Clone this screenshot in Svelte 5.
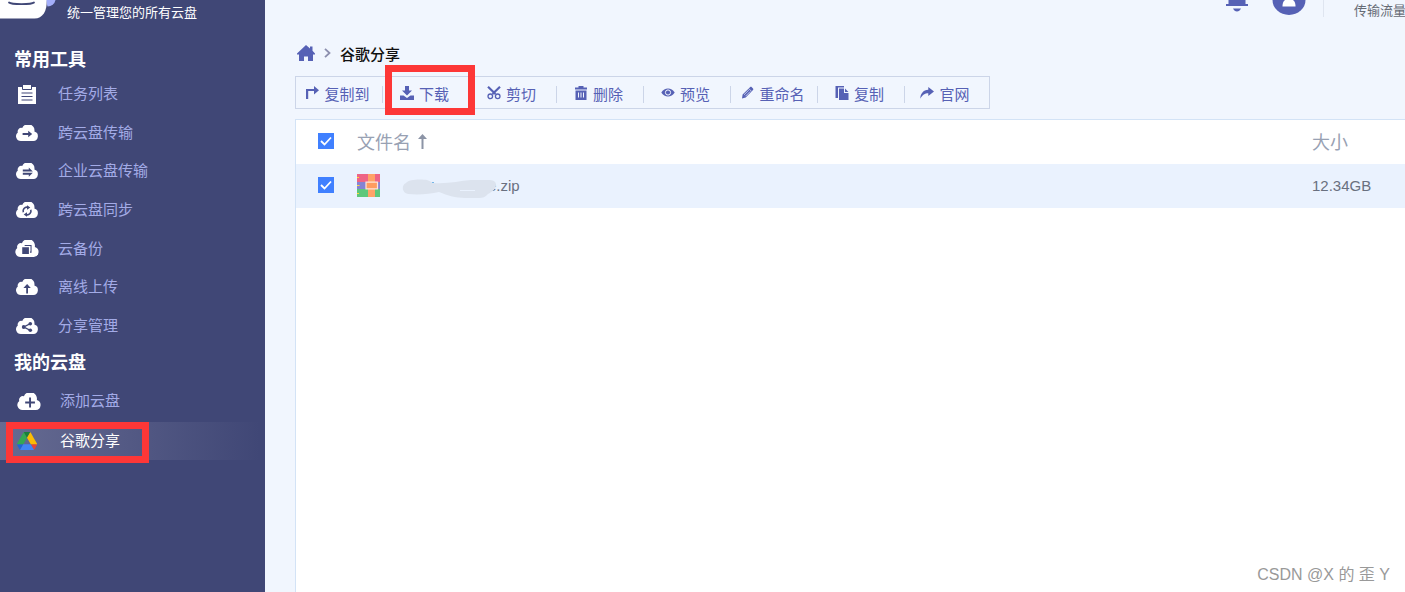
<script>
  const tools = [
    { icon: 'list', label: '任务列表' },
    { icon: 'transfer', label: '跨云盘传输' },
    { icon: 'business', label: '企业云盘传输' },
    { icon: 'sync', label: '跨云盘同步' },
    { icon: 'backup', label: '云备份' },
    { icon: 'upload', label: '离线上传' },
    { icon: 'share', label: '分享管理' }
  ];

  const actions = [
    { icon: 'copyto', label: '复制到' },
    { icon: 'download', label: '下载', marked: true },
    { icon: 'cut', label: '剪切' },
    { icon: 'delete', label: '删除' },
    { icon: 'preview', label: '预览' },
    { icon: 'rename', label: '重命名' },
    { icon: 'copy', label: '复制' },
    { icon: 'site', label: '官网' }
  ];

  let allChecked = $state(true);
  let fileChecked = $state(true);
</script>

{#snippet cloud(kind)}
  <svg class="cloud" class:large={kind === 'backup' || kind === 'add'} viewBox="0 0 22 16" aria-hidden="true">
    <path fill="#fff" d="M4.800 16A4.800 4.800 0 0 1 1.800 7.500 3.600 3.600 0 0 1 6.200 3 6.400 6.400 0 0 1 18.400 6.600 4.800 4.800 0 0 1 17.400 16z" />
    {#if kind === 'transfer'}
      <path fill="#404776" d="M6.600 8h5.600V5.800L16.200 9l-4 3.200V10H6.600z" />
    {:else if kind === 'business'}
      <path fill="#404776" d="M6.800 6.400h6V4.400L16.800 8.400h-10zM6.800 9.800h10L12.800 13.800v-2h-6z" />
    {:else if kind === 'sync'}
      <g fill="none" stroke="#404776" stroke-width="1.600">
        <path d="M7.300 10.300A3.900 3.900 0 0 1 11.600 5.200M14.800 7.800A3.900 3.900 0 0 1 10.400 12.800" />
      </g>
      <path fill="#404776" d="M11 3.200l3.300 2.300-3.300 2.200zM11 14.800l-3.300-2.300 3.300-2.200z" />
    {:else if kind === 'backup'}
      <path fill="#404776" d="M6.500 6.800h6.300v6.400H6.500z" />
      <path fill="none" stroke="#404776" stroke-width="1" d="M8.800 5.200h6v6.200h-1" />
    {:else if kind === 'upload'}
      <path fill="#404776" d="M10.200 14.500V9H7.400l3.700-4 3.700 4H12v5.500z" />
    {:else if kind === 'share'}
      <path fill="none" stroke="#404776" stroke-width="1.200" d="M14.300 5.600 7.700 9l6.600 3.400" />
      <g fill="#404776"><circle cx="14.300" cy="5.700" r="1.800" /><circle cx="7.700" cy="9" r="1.900" /><circle cx="14.300" cy="12.300" r="1.800" /></g>
    {:else if kind === 'add'}
      <path fill="#404776" d="M11.100 4.300h1.800v3.800h3.700v1.800h-3.700v3.800h-1.800V9.900H7.400V8.100h3.700z" />
    {/if}
  </svg>
{/snippet}

<div class="page">
  <aside>
    <div class="brand">
      <svg width="56" height="19" viewBox="0 0 56 19" aria-hidden="true">
        <path fill="#a3aefa" d="M46 0h9.500a8 8 0 0 1-8 6.500z" />
        <path fill="#fff" d="M0 0h46.500c1 11-4 18.500-12 18.500H0z" />
        <path fill="none" stroke="#404776" stroke-width="1.800" stroke-linecap="round" d="M9 2.500c2.500 2.200 22.500 2.200 25 0" />
      </svg>
      <span>统一管理您的所有云盘</span>
    </div>
    <nav>
      <h2>常用工具</h2>
      <ul class="tools">
        {#each tools as tool}
          <li>
            <a href="#{tool.icon}">
              <span class="slot">
                {#if tool.icon === 'list'}
                  <svg width="18" height="19" viewBox="0 0 18 19" aria-hidden="true">
                    <path fill="#fff" d="M0 2h5V0h8v2h5v17H0z" />
                    <path fill="none" stroke="#404776" d="M4.500 2v2.500h9V2" />
                    <path fill="none" stroke="#404776" stroke-width="1.200" d="M3.500 8h11M3.500 11.500h11M3.500 15h11" />
                  </svg>
                {:else}
                  {@render cloud(tool.icon)}
                {/if}
              </span>
              {tool.label}
            </a>
          </li>
        {/each}
      </ul>
      <h2 class="mine">我的云盘</h2>
      <ul class="drives">
        <li><a href="#add"><span class="slot">{@render cloud('add')}</span>添加云盘</a></li>
        <li class="active">
          <a href="#google">
            <span class="slot drive">
              <svg width="20" height="18" viewBox="0 0 87 78" aria-hidden="true">
                <path fill="#1e66d8" d="M6.600 66.900l3.800 6.600c.8 1.400 2 2.500 3.300 3.300L27.500 53H0c0 1.600.4 3.100 1.200 4.500z" />
                <path fill="#34a853" d="M43.600 25 29.900 1.200c-1.300.8-2.500 1.900-3.300 3.300L1.200 48.500A9 9 0 0 0 0 53h27.500z" />
                <path fill="#ea4335" d="M73.600 76.800c1.300-.8 2.500-1.900 3.300-3.300l9.200-16c.8-1.400 1.200-2.900 1.200-4.500H59.800l5.900 11.500z" />
                <path fill="#188038" d="M43.600 25 57.400 1.200C56 .4 54.500 0 52.900 0H34.400c-1.600 0-3.200.4-4.500 1.200z" />
                <path fill="#4285f4" d="M59.800 53H27.500L13.700 76.800c1.400.8 2.900 1.200 4.500 1.200h50.900c1.600 0 3.200-.4 4.500-1.200z" />
                <path fill="#fbbc04" d="M73.400 26.500 60.700 4.500c-.8-1.400-2-2.500-3.300-3.300L43.600 25l16.200 28h27.400c0-1.600-.4-3.100-1.200-4.500z" />
              </svg>
            </span>
            谷歌分享
          </a>
          <i class="mark"></i>
        </li>
      </ul>
    </nav>
  </aside>

  <main>
    <header>
      <button class="plain" aria-label="通知">
        <svg width="22" height="12" viewBox="0 0 22 12" aria-hidden="true">
          <path fill="#5661b5" d="M2.500 0h17v4H22v2H0V4h2.500zM7 8.500h8c-1 2-2.200 3-4 3s-3-1-4-3z" />
        </svg>
      </button>
      <button class="plain" aria-label="账户">
        <svg width="34" height="15" viewBox="0 0 34 15" aria-hidden="true">
          <path fill="#5661b5" d="M.5 0h33A16.500 15 0 0 1 .5 0z" />
          <path fill="#fff" d="M13 0h8c2 1.500 2.500 3.500 2.500 6.500h-13C10.500 3.500 11 1.500 13 0z" />
        </svg>
      </button>
      <span class="traffic">传输流量</span>
    </header>

    <nav class="crumbs">
      <a href="#home" aria-label="主页">
        <svg width="18" height="16" viewBox="0 0 18 16" aria-hidden="true">
          <path fill="#5661b5" d="M9 0 13 3.500V1.500h2.500v4.300L18 8.500v1h-2V16h-5v-4.500H7V16H2V9.500H0v-1z" />
        </svg>
      </a>
      <svg width="7" height="10" viewBox="0 0 7 10" aria-hidden="true"><path fill="none" stroke="#8c8fae" stroke-width="1.800" d="m1 .8 4.500 4.200L1 9.200" /></svg>
      <strong>谷歌分享</strong>
    </nav>

    <div class="toolbar">
      {#each actions as action}
        <button>
          <svg width="14" height="14" viewBox="0 0 14 14" fill="#5661b5" aria-hidden="true">
            {#if action.icon === 'copyto'}
              <path d="M1 13V3h8V0l5 4.200L9 8.400V5H3.200v8z" />
            {:else if action.icon === 'download'}
              <path d="M5 0h4v4.500h3L7 9.500 2 4.500h3zM0 9.500h3.500L7 12l3.500-2.500H14V14H0z" />
            {:else if action.icon === 'cut'}
              <path fill="none" stroke="#5661b5" stroke-width="2.200" d="M1 .8 8.500 8M13 .8 5.500 8" />
              <g fill="none" stroke="#5661b5" stroke-width="1.300"><circle cx="3.300" cy="10.300" r="2.300" /><circle cx="10.700" cy="10.300" r="2.300" /></g>
            {:else if action.icon === 'delete'}
              <path fill-rule="evenodd" d="M4.500 0h5v1.500H13v2H1v-2h3.500zM1.500 4.500h11V14h-11zM4 6.500v5h1v-5zm2.500 0v5h1v-5zm2.500 0v5h1v-5z" />
            {:else if action.icon === 'preview'}
              <path d="M.3 6.500C3.500 1.200 10.500 1.200 13.700 6.500 10.500 11.800 3.500 11.800.3 6.500z" />
              <circle cx="7" cy="6.500" r="2.600" fill="none" stroke="#f1f6fe" />
            {:else if action.icon === 'rename'}
              <path d="M2 12.500 2.600 8.600 10 1.200c.6-.6 1.200-.6 1.800 0l1.200 1.200c.5.5.5 1.100 0 1.700L5.700 11.500z" />
              <path fill="none" stroke="#f1f6fe" stroke-width=".7" d="M8.800 2.600 11.500 5.300M4 8.800l4.800-4.700M5.500 10.200l4.700-4.700" />
            {:else if action.icon === 'copy'}
              <path d="M.5 0H9v1.500H3V12H.5zM4 2.500h5V7h4.500v7H4zM10 2.500 13.500 6H10z" />
            {:else}
              <path d="M8.300 1 14 5.400 8.300 10V7.300C4.800 7.300 2.500 8.800.3 12.700.5 7.500 3.200 4.200 8.300 3.800z" />
            {/if}
          </svg>
          {action.label}
          {#if action.marked}<i class="mark"></i>{/if}
        </button>
      {/each}
    </div>

    <section class="panel">
      <table>
        <thead>
          <tr>
            <th class="pick"><input type="checkbox" aria-label="全选" bind:checked={allChecked} /></th>
            <th>
              <span class="name">文件名
                <svg class="sort" width="9" height="15" viewBox="0 0 9 15" aria-hidden="true"><path fill="#8c94a6" d="M4.500 0 9 5H5.500v10h-2V5H0z" /></svg>
              </span>
            </th>
            <th class="size">大小</th>
          </tr>
        </thead>
        <tbody>
          <tr>
            <td class="pick"><input type="checkbox" aria-label="选择文件" bind:checked={fileChecked} /></td>
            <td>
              <span class="file">
                <svg width="23" height="23" viewBox="0 0 23 23" aria-hidden="true">
                  <path fill="#ee6586" d="M0 0h23v8H0z" />
                  <path fill="#8583d3" d="M0 8h23v7H0z" />
                  <path fill="#5ec77b" d="M0 15h23v8H0z" />
                  <path fill="#ffa368" d="M11 0h7v23h-7z" />
                  <path fill="#ff9c60" stroke="#ffe5d8" stroke-width="1.200" d="M9 8.200h11.500v6.600H9z" />
                  <path stroke="#ffd83b" d="M0 3.500h2M0 11.500h2.500M0 19.500h2" />
                </svg>
                <svg class="smudge" width="96" height="24" viewBox="0 0 96 24" aria-hidden="true">
                  <path fill="#dce3ee" d="M5 8c2-4 16-4 21-3l7 3c14 1 25-2 37-3h17c5 0 8 1 8 5 0 4-4 7-8 9-3 3-5 4-9 4H64c-9 0-19-3-26-6-9 2-20 3-31 2C1 18 0 10 5 8z" />
                  <path stroke="#eaf2fe" d="M59 15.500h15" />
                  <path stroke="#77b7e8" d="M31 7.500h2" />
                </svg>
                <span>e.zip</span>
              </span>
            </td>
            <td class="size">12.34GB</td>
          </tr>
        </tbody>
      </table>
    </section>
  </main>
  <span class="credit">CSDN @X 的 歪 Y</span>
</div>

<style>
  :global(body) {
    margin: 0;
  }
  .page {
    position: relative;
    display: grid;
    grid-template-columns: 265px minmax(0, 1fr);
    min-height: 100vh;
    background: #f1f6fe;
    font-family: "Liberation Sans", "Noto Sans CJK SC", sans-serif;
  }
  svg {
    display: block;
    flex: none;
  }
  a {
    color: inherit;
    text-decoration: none;
  }
  ul {
    list-style: none;
    margin: 0;
    padding: 0;
  }
  button {
    font: inherit;
    border: 0;
    background: none;
    cursor: pointer;
  }
  aside {
    background: #404776;
    color: #a3abe6;
  }
  .brand {
    display: flex;
    gap: 11px;
    height: 46px;
    color: #fff;
    font-size: 13px;
    line-height: 26px;
  }
  h2 {
    margin: 0;
    padding-left: 14px;
    color: #fff;
    font-size: 18px;
    line-height: 29px;
  }
  h2.mine {
    line-height: 37px;
  }
  .tools {
    display: grid;
    grid-auto-rows: 1fr;
    min-height: 270px;
  }
  li {
    position: relative;
    display: grid;
  }
  li a {
    display: flex;
    align-items: center;
    gap: 19px;
    padding-left: 15px;
    font-size: 15px;
    line-height: 24px;
  }
  .drives {
    display: grid;
    grid-auto-rows: 38px;
    gap: 2px;
  }
  .drives a {
    padding-left: 17px;
  }
  .slot {
    display: flex;
    justify-content: center;
    width: 24px;
  }
  .slot.drive {
    justify-content: flex-start;
  }
  .cloud {
    width: 22px;
    height: 16px;
  }
  .cloud.large {
    width: 24px;
    height: 17px;
  }
  .active {
    color: #fff;
    background: linear-gradient(90deg, #666b92, #404776 98%);
  }
  .mark {
    position: absolute;
    border: 7px solid #fd3737;
    pointer-events: none;
  }
  .active .mark {
    inset: 0 116px -3px 6px;
  }
  main {
    display: flex;
    flex-direction: column;
    padding-left: 30px;
  }
  header {
    display: flex;
    justify-content: flex-end;
    align-items: flex-start;
    height: 40px;
    overflow: hidden;
  }
  .plain {
    padding: 0;
    margin-right: 24px;
  }
  .plain + .plain {
    margin-right: 17px;
  }
  .traffic {
    box-sizing: border-box;
    width: 82px;
    height: 17px;
    padding-left: 30px;
    border-left: 1px solid #dfe5f0;
    color: #666b75;
    font-size: 13px;
    line-height: 22px;
    white-space: nowrap;
    overflow: hidden;
  }
  .crumbs {
    display: flex;
    align-items: center;
    gap: 9px;
    height: 26px;
    padding: 0 0 10px 2px;
    font-size: 15px;
    color: #111;
  }
  .crumbs strong {
    font-weight: 500;
  }
  .toolbar {
    display: flex;
    align-self: flex-start;
    height: 31px;
    border: 1px solid #ccd5e8;
  }
  .toolbar button {
    position: relative;
    display: flex;
    align-items: center;
    justify-content: center;
    gap: 5px;
    width: 87px;
    padding: 1px 4px 0 0;
    color: #5661b5;
    font-size: 15px;
    white-space: nowrap;
  }
  .toolbar button:not(:last-child)::after {
    content: "";
    position: absolute;
    right: 0;
    top: 9px;
    height: 17px;
    border-right: 1px solid #ccd5e8;
  }
  .toolbar button:last-child {
    width: 84px;
  }
  .toolbar .mark {
    inset: -12px -5px -7px 2px;
    z-index: 1;
  }
  .panel {
    flex: 1;
    margin-top: 10px;
    border: solid #d3e3f6;
    border-width: 1px 0 0 1px;
    background: #fff;
  }
  table {
    width: 100%;
    table-layout: fixed;
    border-collapse: collapse;
  }
  th,
  td {
    box-sizing: border-box;
    height: 44px;
    padding: 0 0 2px;
    text-align: left;
  }
  th {
    color: #98a1b3;
    font-size: 18px;
    font-weight: 400;
  }
  td {
    color: #697080;
    font-size: 15px;
  }
  tbody tr {
    background: #eaf2fe;
  }
  .pick {
    width: 61px;
  }
  .size {
    width: 93px;
  }
  input {
    appearance: none;
    display: block;
    width: 16px;
    height: 16px;
    margin: 0 0 0 22px;
    border: 1px solid #4080ff;
    background: #fff;
  }
  input:checked {
    background: #4080ff url("data:image/svg+xml,%3Csvg xmlns='http://www.w3.org/2000/svg' viewBox='0 0 14 14'%3E%3Cpath d='M2 7l3.500 3.500L12 3.500' fill='none' stroke='white' stroke-width='1.800'/%3E%3C/svg%3E");
  }
  .name,
  .file {
    display: flex;
    align-items: center;
  }
  .name {
    gap: 7px;
  }
  .smudge {
    position: relative;
    margin: 4px -9px 0 21px;
  }
  .credit {
    position: absolute;
    right: 15px;
    bottom: 5px;
    color: #999;
    font-size: 16px;
    line-height: 24px;
  }
</style>
